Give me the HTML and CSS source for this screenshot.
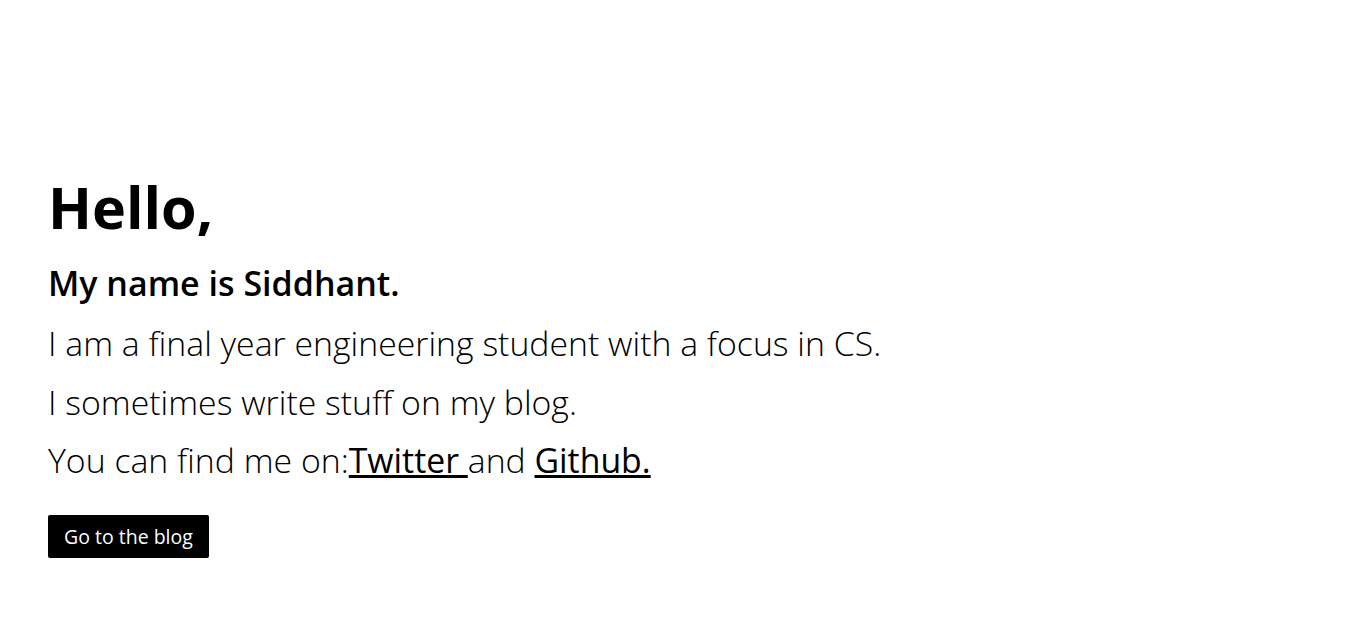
FILE: index.html
```html
<!DOCTYPE html>
<html lang="en">
<head>
  <meta charset="UTF-8" />
  <meta name="viewport" content="width=device-width, initial-scale=1" />
  <title>Siddhant</title>
  <link rel="stylesheet" href="styles.css">
</head>
<body>

<main class="intro">
  <h1>Hello,</h1>
  <h2>My name is Siddhant.</h2>
  <p>I am a final year engineering student with a focus in CS.</p>
  <p>I sometimes write stuff on my blog.</p>
  <p>You can find me on:<a href="#">Twitter </a>and <a href="#">Github.</a></p>
  <a class="blog-btn" href="#">Go to the blog</a>
</main>

</body>
</html>
```

FILE: styles.css
```css
* {
  box-sizing: border-box;
  margin: 0;
  padding: 0;
}

body {
  font-family: 'Open Sans', 'Noto Sans', sans-serif;
  color: #000;
  background: #fff;
}

.intro {
  padding: 169px 48px 0;
}

h1 {
  font-size: 57.5px;
  font-weight: 700;
  line-height: 76px;
}

h2 {
  font-size: 34px;
  font-weight: 600;
  line-height: 50px;
  margin: 13px 0 6px;
}

p {
  font-size: 33.8px;
  font-weight: 300;
  line-height: 58.5px;
}

p a {
  color: #000;
  font-weight: 400;
}

.blog-btn {
  display: inline-block;
  margin-top: 25px;
  padding: 0 16px;
  height: 43px;
  line-height: 43px;
  background: #000;
  color: #fff;
  font-size: 19.5px;
  text-decoration: none;
  border-radius: 2px;
}
```
